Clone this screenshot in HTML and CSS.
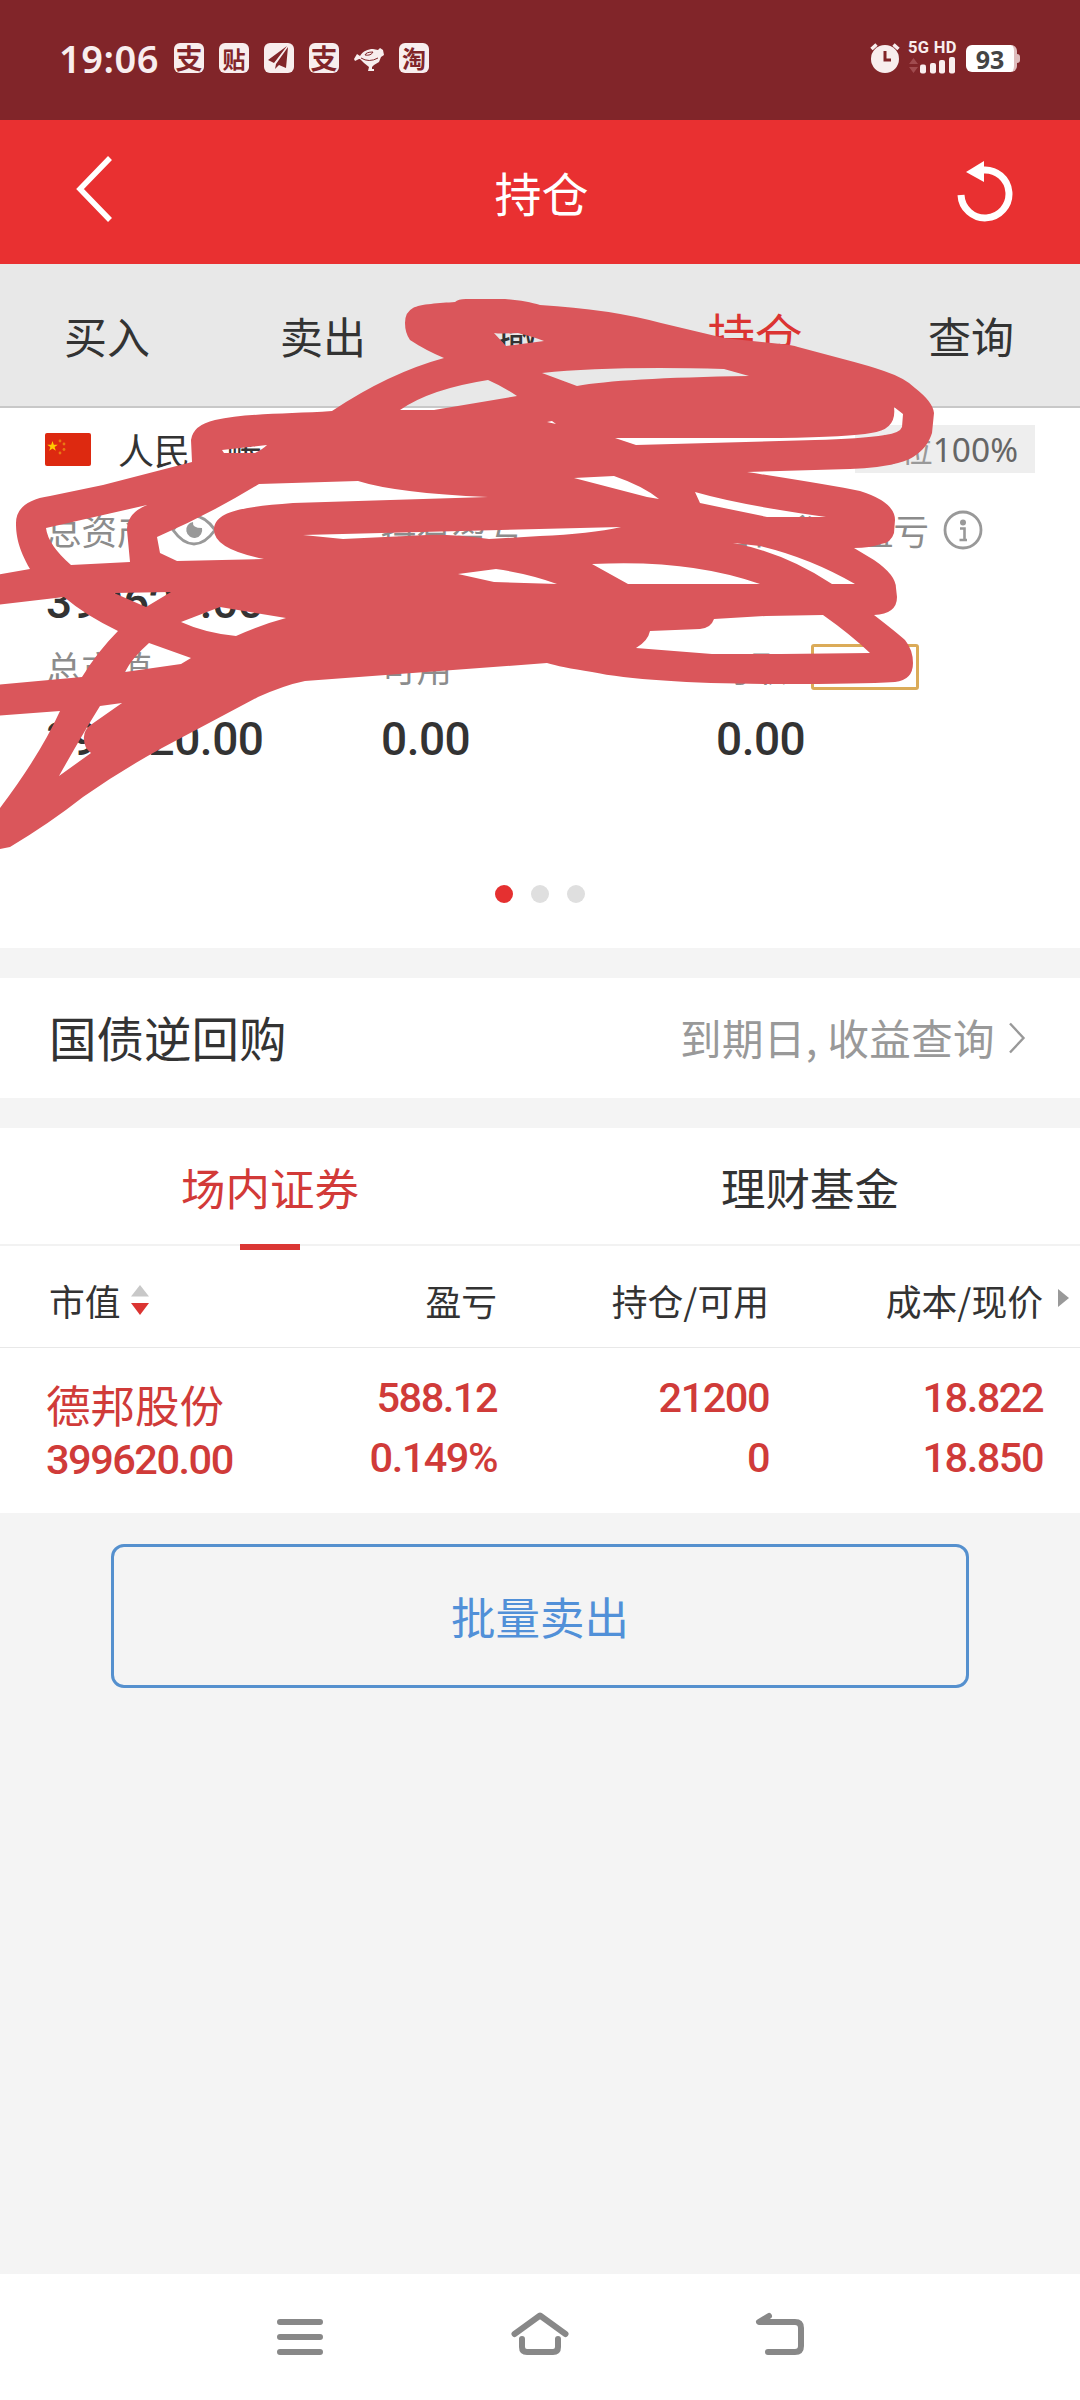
FILE: index.html
```html
<!DOCTYPE html>
<html lang="zh-CN">
<head>
<meta charset="utf-8">
<title>持仓</title>
<link rel="stylesheet" href="styles.css">
</head>
<body>
<div class="screen">
  <header class="status">
    <span class="clock">19:06</span>
    <div class="notices">
      <span class="app alipay">支</span>
      <span class="app tieba">贴</span>
      <span class="app"><svg viewBox="0 0 30 30"><path d="M23 3 4 17l6 3zM24 4 12 21l-1 5 4-4 7 3z" fill="#812529"/></svg></span>
      <span class="app alipay">支</span>
      <svg class="joy" viewBox="0 0 30 30"><path d="M0 16 3 11l3 2C9 8 14 6 19 6l5 1 2-2 3 2 1 5-3 2-2 5-5 3-2 2v2h2v2h-6l1-4-5-4-4-4H5l-4 2z" fill="#f8eeee"/><path d="M11 12q1-3 8-3-2 4-8 3zM7 15q8 5 17 0" fill="none" stroke="#812529" stroke-width="1"/></svg>
      <span class="app taobao">淘</span>
    </div>
    <div class="system">
      <svg class="alarm" viewBox="0 0 30 30"><circle cx="15" cy="16" r="14" fill="#f8eeee"/><path d="M1.500 6 6.500 1.500M28.500 6 23.500 1.500" stroke="#f8eeee" stroke-width="3.500"/><path d="M15 8v9h6" fill="none" stroke="#812529" stroke-width="3"/></svg>
      <div class="signal">
        <span class="net">5G HD</span>
        <svg viewBox="0 0 48 17"><path d="M1 7 5.500 1 10 7zM1 10h9l-4.500 6z" fill="#a04b4f"/><g fill="#f8eeee"><rect x="12" y="7.500" width="6" height="9" rx="2"/><rect x="22" y="6" width="6" height="10.500" rx="2"/><rect x="31" y="3" width="6" height="13.500" rx="2"/><rect x="41" y="0" width="6" height="16.500" rx="2"/></g></svg>
      </div>
      <div class="battery"><span>93</span></div>
    </div>
  </header>

  <div class="titlebar">
    <svg class="back" viewBox="0 0 40 70"><path d="M37 4 7 35 37 66" fill="none" stroke="#fff" stroke-width="5.500"/></svg>
    <h1>持仓</h1>
    <svg class="reload" viewBox="0 0 56 62"><path d="M4 34A24 24 0 1 0 26 9" fill="none" stroke="#fff" stroke-width="7"/><path d="M9 11 27 0v21z" fill="#fff"/></svg>
  </div>

  <nav class="tabs">
    <span>买入</span><span>卖出</span><span>撤单</span><span class="on">持仓</span><span>查询</span>
  </nav>

  <section class="account">
    <div class="account-head">
      <svg class="flag" viewBox="0 0 46 33"><rect width="46" height="33" rx="2" fill="#dd2910"/><path d="m7.500 8 1.300 3.700h4l-3.200 2.300 1.200 3.800-3.300-2.300-3.300 2.300 1.200-3.800L2.200 11.700h4z" fill="#fc0"/><g fill="#e97a14"><circle cx="15" cy="8" r="1.400"/><circle cx="19" cy="11" r="1.400"/><circle cx="19" cy="16.500" r="1.400"/><circle cx="15" cy="20" r="1.400"/></g></svg>
      <span class="account-name">人民币账户</span>
      <span class="ratio"><i>仓位</i>100%</span>
    </div>
    <div class="figures">
      <div class="label">总资产 <svg class="eye" viewBox="0 0 46 32"><path d="M2 16Q12 2 23 2T44 16Q34 30 23 30T2 16z" fill="none" stroke="#999" stroke-width="3"/><path d="M22 8q-1 6 9 6a8 8 0 1 1-9-6z" fill="#999"/></svg></div>
      <div class="label">持有盈亏</div>
      <div class="label">当日参考盈亏 <svg class="info" viewBox="0 0 40 40"><circle cx="20" cy="20" r="18" fill="none" stroke="#999" stroke-width="2.800"/><circle cx="20" cy="12.500" r="3" fill="#999"/><path d="M17 18.500h4.500V30M16.500 30h7.500" fill="none" stroke="#999" stroke-width="2.600"/></svg></div>
      <div class="value">399620.00</div><div class="value"></div><div class="value"></div>
      <div class="label low">总市值</div>
      <div class="label low">可用</div>
      <div class="label low">可取 <span class="tag"></span></div>
      <div class="value last">399620.00</div><div class="value last">0.00</div><div class="value last">0.00</div>
    </div>
    <div class="dots"><i class="on"></i><i></i><i></i></div>
  </section>

  <section class="repo">
    <span class="repo-name">国债逆回购</span>
    <span class="repo-more">到期日, 收益查询</span>
    <svg class="chev" viewBox="0 0 18 32"><path d="M2 1.500 15.500 16 2 30.500" fill="none" stroke="#999" stroke-width="2.400"/></svg>
  </section>

  <section class="holdings">
    <div class="kinds"><span class="on">场内证券</span><span>理财基金</span></div>
    <div class="cols head">
      <span class="first">市值 <svg class="sort" viewBox="0 0 18 30"><path d="M0 11.500 9 0l9 11.500z" fill="#c8c8c8"/><path d="M0 18h18L9 30z" fill="#db3432"/></svg></span>
      <span>盈亏</span><span>持仓/可用</span><span>成本/现价</span>
      <svg class="more" viewBox="0 0 11 18"><path d="M0 0 11 9 0 18z" fill="#999"/></svg>
    </div>
    <div class="cols row">
      <div class="first"><b>德邦股份</b><em>399620.00</em></div>
      <div><em>588.12</em><em>0.149%</em></div>
      <div><em>21200</em><em>0</em></div>
      <div><em>18.822</em><em>18.850</em></div>
    </div>
  </section>

  <div class="sell">批量卖出</div>

  <footer class="nav">
    <svg viewBox="0 0 60 60"><path d="M10 13h40M10 28h40M10 43h40" /></svg>
    <svg viewBox="0 0 60 60"><path d="M4.500 25 30 6.500 55.500 25M12 30v8q0 5 5 5h26q5 0 5-5v-8"/></svg>
    <svg viewBox="0 0 60 60"><path d="M19 7 9 13h36q6 0 6 6v18q0 6-6 6H18" /></svg>
  </footer>

  <svg class="scribble" viewBox="0 0 1080 900"><path fill-rule="evenodd" d="
    M405 323Q405 312 413 308C420 304 440 303 455 302Q458 299 466 299H500C515 299 530 302 540 305Q609 309 661 323L724 338 781 344Q792 345 798 347L843 359Q870 366 884 371Q905 378 915 388Q933 402 934 413L932 433C927 450 912 460 898 463Q880 468 850 469L747 472Q830 485 860 491Q895 502 895 520L894 533Q891 543 881 544Q870 548 854 548L874 560Q896 575 896 588L897 597Q897 614 874 615Q896 632 905 640Q913 650 913 663Q913 680 895 682Q860 684 781 684C700 684 630 680 592 672Q560 667 547 663L305 681Q285 685 258 697L162 748Q120 771 83 797Q50 823 10 847L-5 850V815L0 808Q40 755 60 711L-5 716V685L82 677Q98 651 118 631Q85 615 64 597L-5 605V575L30 569C18 548 16 535 16 523Q16 501 50 496L103 485 192 462 191 440Q193 425 215 420C245 413 290 414 332 411Q389 373 444 358Q425 350 410 340Q405 333 405 323Z
    M494 333Q500 334 518 333 534 337 544 341L506 346Z
    M488 380Q504 387 517 396L434 410H400Q430 389 488 380Z
    M542 373Q609 366 724 369L749 376Q620 378 577 386Z
    M894 407 903 414 902 427Q900 433 885 435 860 439 815 440L636 445 615 438H780Q850 437 871 433 897 430 894 407Z
    M547 422 552 421 556 424Z
    M574 478 614 476Q643 486 659 499L647 497Z
    M695 492Q740 505 826 517L767 517 700 503Z
    M222 450 267 445Q263 449 255 453H224Z
    M46 528 147 505Q127 513 127 530L130 562 71 565Q48 545 46 528Z
    M259 484 358 481Q396 493 488 497L293 503C240 507 214 512 214 530Q214 549 264 559L177 561 160 553 157 537Q210 514 259 484Z
    M303 535 621 527Q590 534 540 536L489 539Q450 534 427 535L343 539Z
    M458 574 496 569Q530 574 557 584L494 582Z
    M592 564Q690 559 760 584H628Z
    M733 543 760 546Q810 558 855 584H832Q785 553 733 543Z
    M714 619 766 616 823 615Q850 634 870 653L781 654H712L636 648Q648 641 650 631L700 629Q711 628 714 619Z
    M114 593 171 592 146 607Z
    M181 622 220 607 286 618Q260 625 236 636 205 633 181 622Z
    M149 643 191 658 181 664 125 672Q132 658 149 643Z
    M100 706 122 703 92 724Q83 730 84 739 84 748 91 753L59 776Q82 735 100 706Z"/></svg>
</div>
</body>
</html>
```
FILE: styles.css
```css
* { box-sizing: border-box; }
body { margin: 0; }
svg { display: block; flex: none; }
i, em { font-style: normal; }
.screen {
  position: relative;
  display: flex;
  flex-direction: column;
  width: 1080px;
  height: 2400px;
  overflow: hidden;
  background: #f4f4f4;
  color: #333;
  font-family: "Noto Sans CJK SC", sans-serif;
}

.status { display: flex; align-items: center; height: 120px; padding: 0 63px 4px 59px; background: #812529; color: #f8eeee; }
.clock { width: 115px; font: 600 38px/40px "Noto Sans", sans-serif; letter-spacing: .5px; }
.notices { display: flex; align-items: center; gap: 15px; }
.app { display: flex; align-items: center; justify-content: center; width: 30px; height: 30px; border-radius: 6px; background: #f8eeee; color: #812529; font-size: 24px; font-weight: 700; line-height: 30px; white-space: nowrap; }
.app svg { width: 30px; height: 30px; }
.alipay { font-size: 27px; }
.tieba { font-size: 23px; }
.joy { width: 30px; height: 30px; }
.system { display: flex; align-items: center; margin-left: auto; }
.alarm { width: 30px; height: 30px; margin-right: 8px; }
.signal { width: 48px; margin-top: -3px; }
.signal svg { width: 48px; height: 17px; }
.net { display: block; height: 17px; font: 700 16.500px/16px Roboto, sans-serif; letter-spacing: .3px; white-space: nowrap; }
.battery { position: relative; width: 51px; height: 27px; margin-left: 10px; border-radius: 6px; background: #fff; color: #444; font: 700 25px/28px "Noto Sans", sans-serif; text-align: center; border-right: 3px solid #dfbcbd; }
.battery::after { content: ""; position: absolute; right: -6px; top: 9px; width: 3px; height: 9px; border-radius: 0 3px 3px 0; background: #dfbcbd; }

.titlebar { display: flex; align-items: center; justify-content: space-between; height: 144px; padding: 0 67px 0 73px; background: #e93031; color: #fff; }
.back { width: 40px; height: 70px; margin-top: -6px; }
.titlebar h1 { margin: 0; padding-left: 13px; font-size: 47px; font-weight: 400; line-height: 138px; }
.reload { width: 56px; height: 62px; }

.tabs { display: grid; grid-template-columns: repeat(5, 1fr); height: 144px; border-bottom: 2px solid #c8c8c8; background: #e8e8e8; font-size: 43px; line-height: 142px; text-align: center; }
.tabs span { margin-left: -1px; margin-right: 1px; }
.tabs .on { color: #db3432; font-size: 47.500px; line-height: 139px; }

.account { height: 540px; background: #fff; }
.account-head { display: flex; align-items: center; height: 82px; padding: 0 45px; }
.flag { width: 46px; height: 33px; }
.account-name { margin-left: 27px; font-size: 36px; line-height: 80px; }
.ratio { width: 180px; height: 48px; margin-left: auto; padding-right: 17px; background: #eee; color: #666; font: 33.500px/49px "Noto Sans", "Noto Sans CJK SC", sans-serif; text-align: right; }
.ratio i { color: #999; font-size: 32px; }
.figures { display: grid; grid-template-columns: 335px 335px 1fr; grid-template-rows: 79px 67px 66px 74px; padding-left: 46px; }
.label { display: flex; align-items: center; color: #8c8c8c; font-size: 35.500px; line-height: 60px; white-space: nowrap; }
.low { padding-bottom: 4px; }
.eye { width: 46px; height: 32px; margin-left: 18px; }
.info { width: 40px; height: 40px; margin-left: 14px; }
.tag { width: 108px; height: 46px; margin-left: 24px; border: 3px solid #dbab58; border-radius: 3px; }
.value { font: 500 46px/66px Roboto, sans-serif; letter-spacing: -.500px; }
.last { line-height: 74px; }
.dots { display: flex; justify-content: center; gap: 18px; padding-top: 109px; }
.dots i { width: 18px; height: 18px; border-radius: 50%; background: #dfdfdf; }
.dots .on { background: #e53030; }

.repo { display: flex; align-items: center; height: 120px; margin: 30px 0; padding: 0 54px 0 49px; background: #fff; line-height: 116px; }
.repo-name { margin-top: -3px; font-size: 47.500px; }
.repo-more { margin: -3px 0 0 auto; color: #999; font-size: 41.500px; letter-spacing: .4px; }
.chev { width: 18px; height: 32px; margin-left: 13px; }

.holdings { height: 385px; background: #fff; }
.kinds { display: grid; grid-template-columns: 1fr 1fr; height: 118px; border-bottom: 2px solid #f2f2f2; font-size: 44.500px; line-height: 118px; text-align: center; }
.kinds .on { position: relative; color: #d23a38; }
.kinds .on::after { content: ""; position: absolute; left: 240px; bottom: -4px; width: 60px; height: 6px; background: #db3734; }
.cols { position: relative; display: grid; grid-template-columns: 225px 226px 272px 274px; padding-left: 46px; text-align: right; }
.cols .first { text-align: left; }
.head { height: 102px; border-bottom: 1px solid #e8e8e8; font-size: 35.800px; line-height: 108px; }
.head .first { display: flex; align-items: center; padding-left: 3px; }
.sort { width: 18px; height: 30px; margin-left: 10px; }
.more { position: absolute; right: 11px; top: 43px; width: 11px; height: 18px; }
.row { padding-top: 20px; color: #d03b39; }
.row em { display: block; font: 500 41.500px/60px Roboto, sans-serif; letter-spacing: -1.500px; }
.row b { display: block; height: 62px; font-size: 44.500px; font-weight: 400; line-height: 72px; }

.sell { width: 858px; height: 144px; margin: 31px auto 0; border: 3px solid #5590ce; border-radius: 13px; color: #5190d8; font-size: 44.500px; line-height: 138px; text-align: center; }

.nav { display: flex; justify-content: center; gap: 180px; height: 126px; margin-top: auto; padding-top: 35px; background: #fff; }
.nav svg { width: 60px; height: 60px; fill: none; stroke: #888; stroke-width: 6; stroke-linecap: round; stroke-linejoin: round; }

.scribble { position: absolute; left: 0; top: 0; width: 1080px; height: 900px; fill: #da565b; }
```
